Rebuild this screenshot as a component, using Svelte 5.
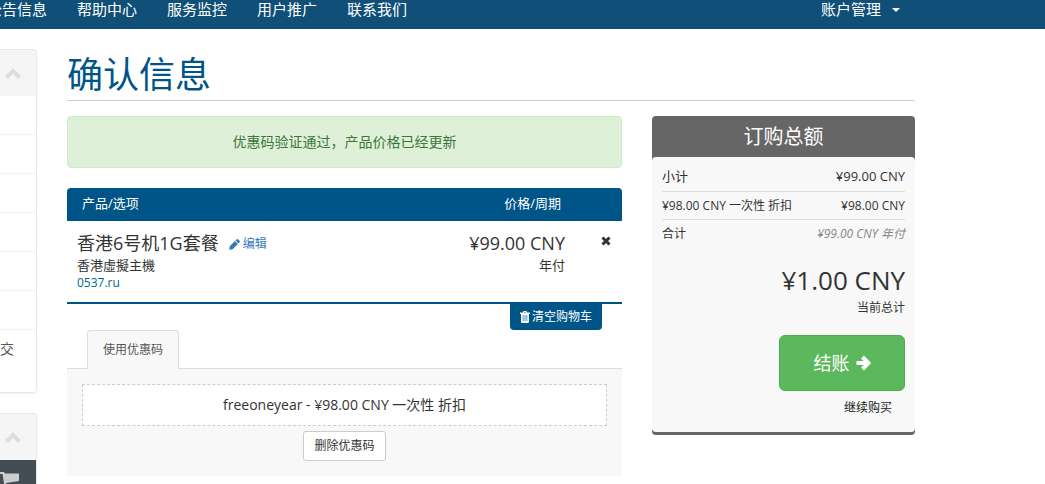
<script>
    let menu = ['公告信息', '帮助中心', '服务监控', '用户推广', '联系我们'];
    let items = [
        { id: 1, name: '香港6号机1G套餐', group: '香港虛擬主機', domain: '0537.ru', price: '¥99.00 CNY', cycle: '年付' }
    ];
    let sideRows = ['', '', '', '', '', '', '交'];
    let promo = 'freeoneyear - ¥98.00 CNY 一次性 折扣';
</script>

{#snippet chevron()}
    <svg class="chevron" viewBox="0 0 16 11" aria-hidden="true">
        <path d="M1.500 9.500L8 3l6.500 6.500" fill="none" stroke="currentColor" stroke-width="4" />
    </svg>
{/snippet}

<nav class="navbar">
    <ul class="menu">
        {#each menu as item (item)}
            <li><a href="#top">{item}</a></li>
        {/each}
    </ul>
    <a class="account" href="#account">账户管理 <span class="caret"></span></a>
</nav>

<div class="page">
    <aside class="sidebar">
        <div class="panel">
            <div class="panel-head">{@render chevron()}</div>
            <ul>
                {#each sideRows as row}
                    <li>{row}</li>
                {/each}
            </ul>
        </div>
        <div class="panel">
            <div class="panel-head">{@render chevron()}</div>
            <div class="active">
                <svg class="cart" viewBox="0 0 20 20" aria-hidden="true">
                    <path d="M0 1h4l1 1.500h14V10L6 12l.3 1.500H18v2H4.500L2.500 3H0z" />
                    <circle cx="7" cy="18" r="2" />
                    <circle cx="16" cy="18" r="2" />
                </svg>
            </div>
        </div>
    </aside>

    <main>
        <h1>确认信息</h1>
        <div class="columns">
            <section class="cart-body">
                <div class="alert" role="status">优惠码验证通过，产品价格已经更新</div>

                <table>
                    <thead>
                        <tr>
                            <th>产品/选项</th>
                            <th class="price">价格/周期</th>
                            <th class="remove"></th>
                        </tr>
                    </thead>
                    <tbody>
                        {#each items as item (item.id)}
                            <tr>
                                <td>
                                    <div class="title">
                                        {item.name}
                                        <a class="edit" href="#edit">
                                            <svg viewBox="0 0 12 12" aria-hidden="true">
                                                <path d="M.8 8l5.700-5.700 3.200 3.200L4 11.200l-3.700.5zM7.200 1.600L8.500.4q.6-.6 1.200 0l1.900 1.900q.6.6 0 1.200l-1.200 1.300z" />
                                            </svg>
                                            编辑
                                        </a>
                                    </div>
                                    <div class="group">{item.group}</div>
                                    <div class="domain">{item.domain}</div>
                                </td>
                                <td class="price">
                                    <div class="title">{item.price}</div>
                                    <div class="group">{item.cycle}</div>
                                </td>
                                <td class="remove">
                                    <button aria-label="Remove">
                                        <svg viewBox="0 0 10 10" aria-hidden="true">
                                            <path d="M1.500 1.500l7 7M8.500 1.500l-7 7" stroke="currentColor" stroke-width="3" />
                                        </svg>
                                    </button>
                                </td>
                            </tr>
                        {/each}
                    </tbody>
                </table>
                <div class="empty-cart">
                    <button>
                        <svg viewBox="0 0 10 12" aria-hidden="true">
                            <path fill-rule="evenodd" d="M3 1q0-1 1-1h2q1 0 1 1v.6h3v1.400H9v7.500Q9 12 7.800 12H2.200Q1 12 1 10.500V3H0V1.600h3zM4 1v.6h2V1zM2.800 4v6h.6V4zM4.700 4v6h.6V4zM6.600 4v6h.6V4z" />
                        </svg>
                        清空购物车
                    </button>
                </div>

                <div class="tabs" role="tablist">
                    <button class="tab" role="tab" aria-selected="true">使用优惠码</button>
                </div>
                <div class="tab-content">
                    <div class="promo">{promo}</div>
                    <button class="btn-default">删除优惠码</button>
                </div>
            </section>

            <aside class="summary">
                <h2>订购总额</h2>
                <div class="summary-body">
                    <div class="line subtotal"><span>小计</span><span>¥99.00 CNY</span></div>
                    <div class="line"><span>¥98.00 CNY 一次性 折扣</span><span>¥98.00 CNY</span></div>
                    <div class="line total"><span>合计</span><em>¥99.00 CNY 年付</em></div>
                    <div class="amount">¥1.00 CNY</div>
                    <div class="due">当前总计</div>
                    <button class="checkout">
                        结账
                        <svg viewBox="0 0 16 16" aria-hidden="true">
                            <path d="M1.500 8H13M7.500 2l6 6-6 6" fill="none" stroke="currentColor" stroke-width="4" />
                        </svg>
                    </button>
                    <a class="continue" href="#shop">继续购买</a>
                </div>
            </aside>
        </div>
    </main>
</div>

<style>
    :global(body) {
        margin: 0;
        background: #fff;
        color: #333;
        font: 12px/18px "Open Sans", "Noto Sans CJK SC", sans-serif;
    }
    svg {
        fill: currentColor;
    }
    a {
        text-decoration: none;
    }
    ul {
        list-style: none;
        margin: 0;
        padding: 0;
    }
    button {
        font: inherit;
        cursor: pointer;
    }
    .navbar {
        display: flex;
        justify-content: space-between;
        height: 29px;
        padding-right: 145px;
        background: #0f4f78;
        font-size: 15px;
        line-height: 18px;
        overflow: hidden;
    }
    .navbar a {
        color: #fff;
    }
    .menu {
        display: flex;
        gap: 30px;
        margin-left: -13px;
    }
    .account {
        display: flex;
        align-items: center;
        gap: 11px;
        height: 18px;
    }
    .caret {
        margin-top: 2px;
        border: 4px solid transparent;
        border-top-color: #fff;
        border-bottom: 0;
    }
    .page {
        display: flex;
        gap: 30px;
        padding: 20px 130px 0 0;
    }
    .sidebar {
        flex: 0 0 37px;
    }
    .panel {
        box-sizing: border-box;
        border: 1px solid #e8e8e8;
        border-left: 0;
        border-radius: 0 4px 4px 0;
        box-shadow: 0 1px 1px rgba(0, 0, 0, 0.05);
        overflow: hidden;
    }
    .panel + .panel {
        margin-top: 20px;
        border-bottom: 0;
        border-bottom-right-radius: 0;
    }
    .panel-head {
        display: flex;
        align-items: center;
        height: 46px;
        padding-left: 5px;
        background: #f5f5f5;
        color: #ddd;
    }
    .chevron {
        width: 16px;
        height: 11px;
    }
    .panel li {
        height: 38px;
        border-bottom: 1px solid #f2f2f2;
        color: #555;
        font-size: 14px;
        line-height: 38px;
    }
    .panel li:last-child {
        height: 62px;
        border: 0;
    }
    .active {
        box-sizing: border-box;
        height: 24px;
        padding-top: 11px;
        background: #444d53;
        color: #ccc;
    }
    .cart {
        width: 20px;
        height: 20px;
    }
    main {
        flex: 1;
        min-width: 0;
    }
    h1 {
        margin: 0 0 15px;
        padding-top: 1px;
        border-bottom: 1px solid #ccc;
        color: #058;
        font-size: 36px;
        font-weight: 400;
        line-height: 50px;
    }
    .columns {
        display: grid;
        grid-template-columns: minmax(0, 1fr) 263px;
        gap: 30px;
        align-items: start;
    }
    .alert {
        margin-bottom: 20px;
        padding: 15px;
        border: 1px solid #d0e9c6;
        border-radius: 4px;
        background: #dff0d8;
        color: #3c763d;
        font-size: 14px;
        line-height: 20px;
        text-align: center;
    }
    table {
        width: 100%;
        border-collapse: separate;
        border-spacing: 0;
        border-bottom: 2px solid #058;
    }
    th {
        padding: 6px 15px 9px;
        background: #058;
        color: #fff;
        font-size: 13px;
        font-weight: 400;
        line-height: 18px;
        text-align: left;
    }
    th:first-child {
        border-top-left-radius: 4px;
    }
    th:last-child {
        border-top-right-radius: 4px;
    }
    td {
        padding: 10px;
        vertical-align: top;
    }
    th.price {
        padding-right: 4px;
        text-align: right;
    }
    td.price {
        padding-right: 0;
        text-align: right;
    }
    .price {
        width: 140px;
    }
    .remove {
        box-sizing: border-box;
        width: 57px;
    }
    td.remove {
        padding-right: 11px;
        text-align: right;
    }
    .title {
        display: flex;
        align-items: center;
        gap: 10px;
        font-size: 18px;
        line-height: 25px;
    }
    .price .title {
        justify-content: flex-end;
    }
    .group {
        font-size: 13px;
        line-height: 18px;
    }
    .domain {
        color: #068;
    }
    .edit {
        color: #337ab7;
        font-size: 12px;
    }
    .edit svg {
        width: 11px;
        height: 11px;
        vertical-align: -2px;
    }
    .remove button {
        padding: 0;
        border: 0;
        background: none;
        color: #333;
        line-height: 22px;
    }
    .remove svg {
        width: 10px;
        height: 10px;
    }
    .empty-cart {
        display: flex;
        justify-content: flex-end;
        padding-right: 20px;
    }
    .empty-cart button {
        display: flex;
        align-items: center;
        gap: 2px;
        height: 26px;
        padding: 0 10px;
        border: 0;
        border-radius: 0 0 4px 4px;
        background: #058;
        color: #fff;
    }
    .empty-cart svg {
        width: 10px;
        height: 12px;
    }
    .tabs {
        display: flex;
        padding-left: 20px;
        border-bottom: 1px solid #ddd;
    }
    .tab {
        height: 39px;
        margin-bottom: -1px;
        padding: 0 15px;
        border: 1px solid #ddd;
        border-bottom: 0;
        border-radius: 4px 4px 0 0;
        background: #f8f8f8;
        color: #555;
    }
    .tab-content {
        padding: 15px;
        background: #f8f8f8;
        text-align: center;
    }
    .promo {
        margin-bottom: 5px;
        padding: 10px;
        border: 1px dashed #ccc;
        background: #fff;
        font-size: 14px;
        line-height: 20px;
    }
    .btn-default {
        display: block;
        height: 30px;
        margin: 0 auto;
        padding: 0 10px;
        border: 1px solid #ccc;
        border-radius: 3px;
        background: #fff;
        color: #333;
    }
    .summary {
        padding-bottom: 3px;
        border-radius: 4px;
        background: #666;
    }
    h2 {
        margin: 0;
        color: #fff;
        font-size: 20px;
        font-weight: 400;
        line-height: 41px;
        text-align: center;
    }
    .summary-body {
        display: flex;
        flex-direction: column;
        align-items: flex-end;
        padding: 5px 10px 15px;
        border-radius: 4px;
        background: #f8f8f8;
    }
    .line {
        display: flex;
        align-self: stretch;
        justify-content: space-between;
        border-bottom: 1px solid #ddd;
        line-height: 27px;
    }
    .subtotal {
        font-size: 13px;
        line-height: 29px;
    }
    .total {
        border: 0;
    }
    em {
        color: #888;
    }
    .amount {
        margin-top: 16px;
        font-size: 26px;
        line-height: 34px;
    }
    .due {
        margin: 2px 0 18px;
    }
    .checkout {
        display: flex;
        align-items: center;
        justify-content: center;
        gap: 5px;
        width: 126px;
        height: 56px;
        border: 1px solid #4cae4c;
        border-radius: 6px;
        background: #5cb85c;
        color: #fff;
        font-size: 18px;
    }
    .checkout svg {
        width: 16px;
        height: 16px;
    }
    .continue {
        padding: 8px 13px 0;
        color: #222;
    }
</style>
